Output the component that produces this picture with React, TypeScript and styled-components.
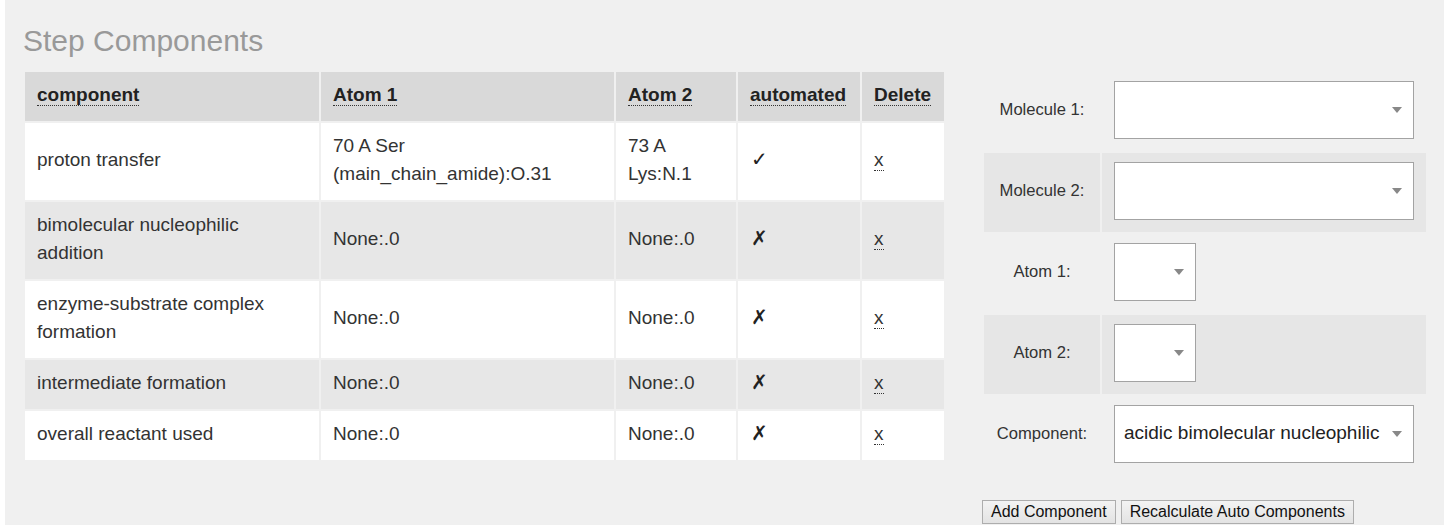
import React from "react";
import styled, { createGlobalStyle } from "styled-components";

const GlobalStyle = createGlobalStyle`
  html, body { margin: 0; padding: 0; background: #fff; }
  body {
    font-family: "Liberation Sans", Arial, "DejaVu Sans", sans-serif;
    color: #333;
  }
`;

const Panel = styled.div`
  margin-left: 5px;
  background: #f0f0f0;
  padding: 24px 0 1px 18px;
`;

const Title = styled.h2`
  margin: 0 0 12px;
  font-size: 30px;
  line-height: 34px;
  font-weight: normal;
  color: #999;
`;

const Main = styled.div`
  display: flex;
  align-items: flex-start;
  gap: 36px;
`;

const DataTable = styled.table`
  border-collapse: separate;
  border-spacing: 2px;
  table-layout: fixed;
  width: 923px;
  font-size: 19px;
`;

const HeadCell = styled.th`
  background: #d9d9d9;
  text-align: left;
  font-weight: bold;
  color: #222;
  padding: 9px 12px 12px;
  line-height: 28px;
  height: 49px;
  box-sizing: border-box;
  vertical-align: middle;
`;

const Cell = styled.td<{ $shade: boolean }>`
  background: ${(p) => (p.$shade ? "#e7e7e7" : "#fff")};
  padding: 9px 12px 12px;
  line-height: 28px;
  vertical-align: middle;
  color: #333;
`;

const Dotted = styled.span`
  border-bottom: 1px dotted #333;
`;

const DeleteLink = styled.a`
  color: #333;
  text-decoration: none;
  border-bottom: 1px dotted #333;
  cursor: pointer;
`;

const Mark = styled.span`
  font-family: "DejaVu Sans", sans-serif;
  font-size: 20px;
  font-weight: bold;
  line-height: 0;
  color: #222;
  padding-left: 1px;
`;

const Side = styled.div`
  display: flex;
  flex-direction: column;
  align-items: flex-start;
`;

const FormTable = styled.table`
  border-collapse: separate;
  border-spacing: 2px;
  table-layout: fixed;
  width: 446px;
`;

const LabelCell = styled.td<{ $shade: boolean }>`
  background: ${(p) => (p.$shade ? "#e6e6e6" : "transparent")};
  height: 79px;
  box-sizing: border-box;
  padding: 0 4px 3px;
  text-align: center;
  vertical-align: middle;
  font-size: 16.6px;
  color: #333;
`;

const FieldCell = styled.td<{ $shade: boolean }>`
  background: ${(p) => (p.$shade ? "#e6e6e6" : "transparent")};
  height: 79px;
  box-sizing: border-box;
  padding: 9px 12px 12px;
  vertical-align: middle;
`;

const SelectWrap = styled.div<{ $w: number }>`
  position: relative;
  width: ${(p) => p.$w}px;
  height: 58px;
`;

const Select = styled.select`
  appearance: none;
  -webkit-appearance: none;
  display: block;
  width: 100%;
  height: 100%;
  box-sizing: border-box;
  border: 1px solid #a3a3a3;
  border-radius: 0;
  background: #fff;
  font-family: "Liberation Sans", Arial, sans-serif;
  font-size: 19px;
  color: #222;
  padding: 0 30px 3px 9px;
  outline: none;
`;

const Arrow = styled.span`
  position: absolute;
  right: 12px;
  top: 50%;
  margin-top: -3px;
  width: 0;
  height: 0;
  border-left: 5px solid transparent;
  border-right: 5px solid transparent;
  border-top: 6px solid #888;
  pointer-events: none;
`;

const Buttons = styled.div`
  display: flex;
  gap: 5px;
  margin-top: 23px;
`;

const Button = styled.button`
  font-family: "Liberation Sans", Arial, sans-serif;
  font-size: 16px;
  height: 24px;
  padding: 0 8px;
  border: 1px solid #adadad;
  border-radius: 0;
  background: linear-gradient(#f3f3f3, #e3e3e3);
  color: #111;
  line-height: 20px;
`;

type Step = {
  component: string[];
  atom1: string[];
  atom2: string[];
  automated: boolean;
};

const steps: Step[] = [
  {
    component: ["proton transfer"],
    atom1: ["70 A Ser", "(main_chain_amide):O.31"],
    atom2: ["73 A", "Lys:N.1"],
    automated: true,
  },
  {
    component: ["bimolecular nucleophilic", "addition"],
    atom1: ["None:.0"],
    atom2: ["None:.0"],
    automated: false,
  },
  {
    component: ["enzyme-substrate complex", "formation"],
    atom1: ["None:.0"],
    atom2: ["None:.0"],
    automated: false,
  },
  {
    component: ["intermediate formation"],
    atom1: ["None:.0"],
    atom2: ["None:.0"],
    automated: false,
  },
  {
    component: ["overall reactant used"],
    atom1: ["None:.0"],
    atom2: ["None:.0"],
    automated: false,
  },
];

const Lines = ({ lines }: { lines: string[] }) => (
  <>
    {lines.map((l, i) => (
      <React.Fragment key={i}>
        {i > 0 && <br />}
        {l}
      </React.Fragment>
    ))}
  </>
);

type Field = { label: string; width: number; value?: string };

const fields: Field[] = [
  { label: "Molecule 1:", width: 300 },
  { label: "Molecule 2:", width: 300 },
  { label: "Atom 1:", width: 82 },
  { label: "Atom 2:", width: 82 },
  {
    label: "Component:",
    width: 300,
    value: "acidic bimolecular nucleophilic addition",
  },
];

export default function App() {
  return (
    <>
      <GlobalStyle />
      <Panel>
        <Title>Step Components</Title>
        <Main>
          <DataTable>
            <colgroup>
              <col style={{ width: 294 }} />
              <col style={{ width: 293 }} />
              <col style={{ width: 120 }} />
              <col style={{ width: 122 }} />
              <col style={{ width: 82 }} />
            </colgroup>
            <thead>
              <tr>
                {["component", "Atom 1", "Atom 2", "automated", "Delete"].map((h) => (
                  <HeadCell key={h}>
                    <Dotted>{h}</Dotted>
                  </HeadCell>
                ))}
              </tr>
            </thead>
            <tbody>
              {steps.map((s, i) => {
                const shade = i % 2 === 1;
                return (
                  <tr key={i}>
                    <Cell $shade={shade}>
                      <Lines lines={s.component} />
                    </Cell>
                    <Cell $shade={shade}>
                      <Lines lines={s.atom1} />
                    </Cell>
                    <Cell $shade={shade}>
                      <Lines lines={s.atom2} />
                    </Cell>
                    <Cell $shade={shade}>
                      <Mark>{s.automated ? "✓" : "✗"}</Mark>
                    </Cell>
                    <Cell $shade={shade}>
                      <DeleteLink>x</DeleteLink>
                    </Cell>
                  </tr>
                );
              })}
            </tbody>
          </DataTable>
          <Side>
            <FormTable>
              <colgroup>
                <col style={{ width: 116 }} />
                <col style={{ width: 324 }} />
              </colgroup>
              <tbody>
                {fields.map((f, i) => {
                  const shade = i % 2 === 1;
                  return (
                    <tr key={f.label}>
                      <LabelCell $shade={shade}>{f.label}</LabelCell>
                      <FieldCell $shade={shade}>
                        <SelectWrap $w={f.width}>
                          <Select defaultValue={f.value ?? ""}>
                            <option value={f.value ?? ""}>{f.value ?? ""}</option>
                          </Select>
                          <Arrow />
                        </SelectWrap>
                      </FieldCell>
                    </tr>
                  );
                })}
              </tbody>
            </FormTable>
            <Buttons>
              <Button>Add Component</Button>
              <Button>Recalculate Auto Components</Button>
            </Buttons>
          </Side>
        </Main>
      </Panel>
    </>
  );
}
